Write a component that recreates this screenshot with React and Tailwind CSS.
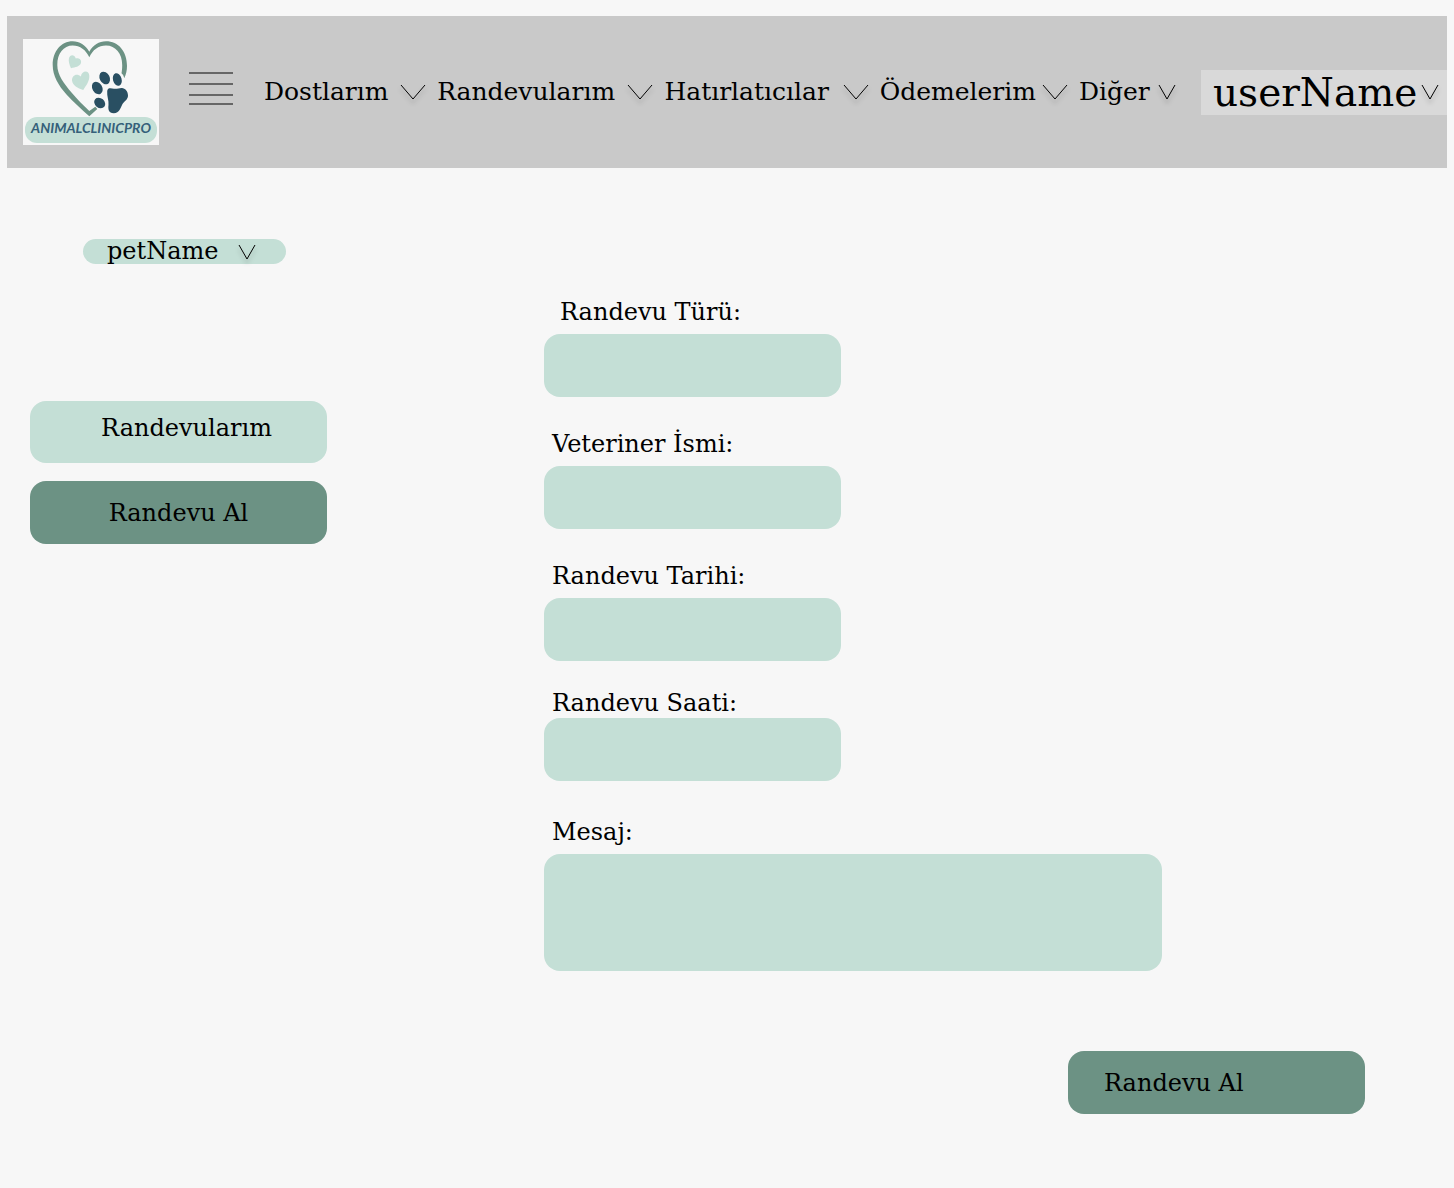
import React from "react";

function Chevron({ wide = false }) {
  return (
    <svg
      className={
        wide
          ? "h-4 w-[26px] shrink-0 overflow-visible drop-shadow-[0_4px_2px_rgba(0,0,0,0.25)]"
          : "h-4 w-[18px] shrink-0 overflow-visible drop-shadow-[0_4px_2px_rgba(0,0,0,0.25)]"
      }
      viewBox={wide ? "0 0 26 16" : "0 0 18 16"}
      fill="none"
      stroke="#000"
      strokeWidth="1"
      aria-hidden="true"
    >
      <path d={wide ? "M1 1L13 15L25 1" : "M1 1L9 15L17 1"} />
    </svg>
  );
}

function Logo() {
  return (
    <svg
      className="h-[106px] w-[136px] shrink-0 bg-[#f7f7f7]"
      viewBox="0 0 136 106"
      role="img"
      aria-label="AnimalClinicPro"
    >
      <path
        fill="#6c9284"
        d="M66.3 12.7C62.5 6 56.5 2.3 49.7 2.3C38 2.3 29.7 12.5 29.7 26C29.7 37 35.5 46.5 43.500 55.500C50.500 63.500 59 70.500 66.300 77.300L74.300 70L72.300 67.700L66.300 72C60 66 54.500 60.500 48.500 53.500C41 44.500 34.300 36 34.300 26C34.300 14.500 40.500 6.500 49.700 6.500C57 6.500 63 11 66.300 18.300C69.500 11 75.500 6.500 83 6.500C92.500 6.500 99.200 14.500 99.200 26C99.200 29 99 31.500 98.500 34.300C100 35.500 100.800 37 101.200 39.300C103 35.500 104 31.500 104 27C104 12.500 95.500 2.300 83 2.300C76 2.300 70 6 66.300 12.700Z"
      />
      <path
        fill="#c4dfd6"
        d="M48 29.200C46.200 25.500 45.300 22 46 19C47 15.200 51.500 15 52.800 19.500C56 18.500 59.200 21 57.800 24.500C56.500 27.500 52.500 28.300 48 29.200Z"
      />
      <path
        fill="#c4dfd6"
        d="M60.300 51C54.500 49 49.800 46.500 49.100 42C48.300 36.500 54 33.500 57.800 37.500C58.800 31.500 65.800 30.500 66.300 36.500C66.800 42 63 46.500 60.300 51Z"
      />
      <g fill="#294f62">
        <ellipse cx="81.700" cy="39" rx="5" ry="6.600" transform="rotate(-27 81.700 39)" />
        <ellipse cx="94.300" cy="40.500" rx="4.300" ry="6.500" transform="rotate(-16 94.300 40.500)" />
        <ellipse cx="74.300" cy="49" rx="4.900" ry="6.700" transform="rotate(-30 74.300 49)" />
        <ellipse cx="76.700" cy="64" rx="4.800" ry="6" transform="rotate(-50 76.700 64)" />
        <path d="M84.200 52C84.600 48.500 88 49.200 91 49.800C94 50.200 96.500 48.800 99 49C102 49.300 105 52 105 56.500C105 60.500 101.500 62 99.500 65C97.500 68.500 96.500 74.300 90.800 74.300C85.500 74.300 85 70 85.500 66C86 61.500 83.700 57 84.200 52Z" />
      </g>
      <rect x="2" y="78" width="132" height="26" rx="12" fill="#c4dfd6" />
      <text
        x="68"
        y="94"
        textAnchor="middle"
        fill="#35607a"
        className="font-['Lato',sans-serif] text-[14px] font-bold italic"
      >
        ANIMALCLINICPRO
      </text>
    </svg>
  );
}

const links = [
  { label: "Dostlarım", wide: true },
  { label: "Randevularım", wide: true },
  { label: "Hatırlatıcılar", wide: true },
  { label: "Ödemelerim", wide: true },
  { label: "Diğer", wide: false },
];

function Header() {
  return (
    <header className="mx-[7px] flex items-center bg-[#c9c9c9] py-[23px] pl-4">
      <Logo />
      <button type="button" aria-label="Menü" className="ml-[30px] shrink-0 pb-2">
        <svg className="h-9 w-11" viewBox="0 0 44 36" stroke="#666" strokeWidth="2" aria-hidden="true">
          <path d="M0 3H44M0 14H44M0 25H44M0 34H44" />
        </svg>
      </button>
      <nav className="ml-[31px] grid flex-1 grid-cols-[162fr_216fr_204fr_188fr_97fr] gap-[11px]">
        {links.map((l) => (
          <button
            key={l.label}
            type="button"
            className="flex min-w-0 items-center justify-between text-[25px] whitespace-nowrap"
          >
            {l.label}
            <Chevron wide={l.wide} />
          </button>
        ))}
      </nav>
      <button
        type="button"
        className="ml-[25px] flex h-[45px] w-[246px] shrink-0 items-center justify-between bg-[#d9d9d9] pr-2 pl-3 text-[39px] leading-[45px]"
      >
        userName
        <Chevron />
      </button>
    </header>
  );
}

const fields = [
  { id: "type", label: "Randevu Türü:", wrap: "", text: "mb-2 pl-4" },
  { id: "vet", label: "Veteriner İsmi:", wrap: "mt-[33px]", text: "mb-2 pl-2" },
  { id: "date", label: "Randevu Tarihi:", wrap: "mt-[33px]", text: "mb-2 pl-2" },
  { id: "time", label: "Randevu Saati:", wrap: "mt-7", text: "mb-px pl-2" },
];

export default function App() {
  return (
    <div className="min-h-screen bg-[#f7f7f7] pt-4 font-['DejaVu_Serif',serif] text-black">
      <Header />
      <main className="grid grid-cols-[514fr_910fr] pt-[71px] pb-[74px] pl-[30px]">
        <aside className="flex w-full max-w-[297px] flex-col">
          <div className="relative ml-[53px] flex w-[203px] items-center">
            <select
              aria-label="petName"
              className="h-[25px] w-full appearance-none rounded-full bg-[#c4dfd6] pl-6 text-2xl leading-[25px]"
            >
              <option>petName</option>
            </select>
            <span className="pointer-events-none absolute right-[30px] flex">
              <Chevron />
            </span>
          </div>
          <button
            type="button"
            className="mt-[137px] h-[62px] rounded-2xl bg-[#c4dfd6] pb-2 pl-4 text-2xl"
          >
            Randevularım
          </button>
          <button type="button" className="mt-[18px] h-[63px] rounded-2xl bg-[#6c9284] text-2xl">
            Randevu Al
          </button>
        </aside>
        <form className="flex flex-col pt-[59px]" onSubmit={(e) => e.preventDefault()}>
          {fields.map((f) => (
            <div key={f.id} className={f.wrap}>
              <label htmlFor={f.id} className={`block text-2xl leading-7 ${f.text}`}>
                {f.label}
              </label>
              <input
                id={f.id}
                type="text"
                className="block h-[63px] w-full max-w-[297px] rounded-2xl bg-[#c4dfd6] px-4 text-2xl"
              />
            </div>
          ))}
          <div className="mt-[37px]">
            <label htmlFor="message" className="mb-2 block pl-2 text-2xl leading-7">
              Mesaj:
            </label>
            <textarea
              id="message"
              className="block h-[117px] w-full max-w-[618px] resize-none rounded-2xl bg-[#c4dfd6] p-4 text-2xl"
            />
          </div>
          <button
            type="submit"
            className="mt-20 mr-[89px] h-[63px] w-[297px] self-end rounded-2xl bg-[#6c9284] pl-9 text-left text-2xl"
          >
            Randevu Al
          </button>
        </form>
      </main>
    </div>
  );
}
